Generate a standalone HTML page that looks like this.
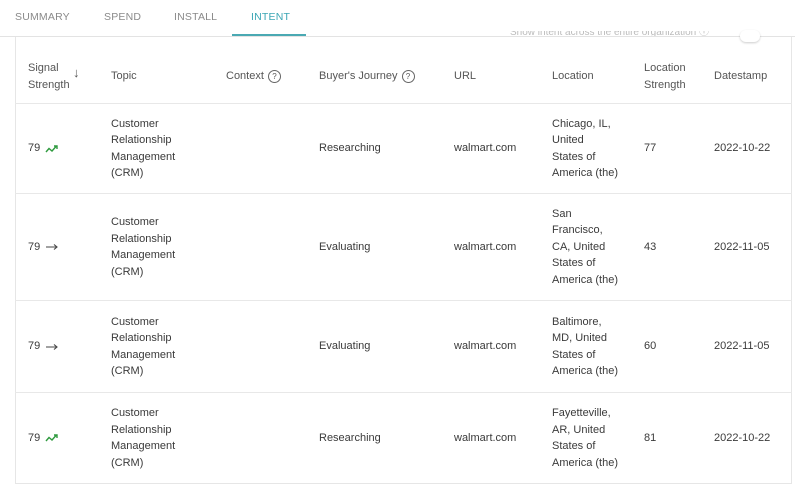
<!DOCTYPE html>
<html><head><meta charset="utf-8"><style>
*{margin:0;padding:0;box-sizing:border-box}
body{width:802px;height:494px;background:#fff;font-family:"Liberation Sans",sans-serif;color:#3a3a3a;font-size:11px;position:relative;overflow:hidden}
.tab{position:absolute;top:11px;font-size:10.5px;color:#8a8a8a;letter-spacing:.2px}
.card{position:absolute;left:15px;top:37px;width:777px;height:447px;border:1px solid #e6e6e6;border-top:none}
.topline{position:absolute;left:0;top:36px;width:795px;height:1px;background:#e3e3e3}
.row{position:absolute;left:15px;width:777px;border-top:1px solid #e8e8e8}
.c{position:absolute;top:0;bottom:0;display:flex;align-items:center;line-height:16.5px}
.h{color:#555}
.q{display:inline-block;width:13px;height:13px;border:1px solid #666;border-radius:50%;font-size:8px;line-height:11px;text-align:center;margin-left:4px;color:#555}
svg{margin-left:5px}
</style></head><body>
<div class="tab" style="left:15px">SUMMARY</div>
<div class="tab" style="left:104px">SPEND</div>
<div class="tab" style="left:174px">INSTALL</div>
<div class="tab" style="left:251px;color:#3ba6b5">INTENT</div>
<div style="position:absolute;left:232px;top:34px;width:74px;height:2px;background:#4aa9b3"></div>
<div class="topline"></div>
<div style="position:absolute;left:510px;top:31px;font-size:10px;color:#bbb;height:5px;overflow:hidden;line-height:4px">Show intent across the entire organization ⓘ</div>
<div style="position:absolute;left:740px;top:30px;width:20px;height:12px;border-radius:6px;background:#fff;box-shadow:0 1px 2px rgba(0,0,0,.2)"></div>
<div class="card"></div>

<div class="row" style="top:50px;height:53px;border-top:none">
<div class="c h" style="left:13px">Signal<br>Strength</div>
<div class="c h" style="left:58px;top:-6px;font-size:13px">↓</div>
<div class="c h" style="left:96px">Topic</div>
<div class="c h" style="left:211px">Context <span class="q">?</span></div>
<div class="c h" style="left:304px">Buyer's Journey <span class="q">?</span></div>
<div class="c h" style="left:439px">URL</div>
<div class="c h" style="left:537px">Location</div>
<div class="c h" style="left:629px">Location<br>Strength</div>
<div class="c h" style="left:699px">Datestamp</div>
</div>

<div class="row" style="top:103px;height:90px">
<div class="c" style="left:13px">79<svg width="14" height="10" viewBox="0 0 14 10"><path d="M1 8 L4 4.5 L7 7 L11 2.5 M9 2 L12 2 L12 5" fill="none" stroke="#2e9a3e" stroke-width="1.4"/></svg></div>
<div class="c" style="left:96px">Customer<br>Relationship<br>Management<br>(CRM)</div>
<div class="c" style="left:304px">Researching</div>
<div class="c" style="left:439px">walmart.com</div>
<div class="c" style="left:537px">Chicago, IL,<br>United<br>States of<br>America (the)</div>
<div class="c" style="left:629px">77</div>
<div class="c" style="left:699px">2022-10-22</div>
</div>

<div class="row" style="top:193px;height:107px">
<div class="c" style="left:13px">79<svg width="14" height="8" viewBox="0 0 14 8"><path d="M1 4 L12 4 M9 1.5 L12 4 L9 6.5" fill="none" stroke="#444" stroke-width="1.1"/></svg></div>
<div class="c" style="left:96px">Customer<br>Relationship<br>Management<br>(CRM)</div>
<div class="c" style="left:304px">Evaluating</div>
<div class="c" style="left:439px">walmart.com</div>
<div class="c" style="left:537px">San<br>Francisco,<br>CA, United<br>States of<br>America (the)</div>
<div class="c" style="left:629px">43</div>
<div class="c" style="left:699px">2022-11-05</div>
</div>

<div class="row" style="top:300px;height:92px">
<div class="c" style="left:13px">79<svg width="14" height="8" viewBox="0 0 14 8"><path d="M1 4 L12 4 M9 1.5 L12 4 L9 6.5" fill="none" stroke="#444" stroke-width="1.1"/></svg></div>
<div class="c" style="left:96px">Customer<br>Relationship<br>Management<br>(CRM)</div>
<div class="c" style="left:304px">Evaluating</div>
<div class="c" style="left:439px">walmart.com</div>
<div class="c" style="left:537px">Baltimore,<br>MD, United<br>States of<br>America (the)</div>
<div class="c" style="left:629px">60</div>
<div class="c" style="left:699px">2022-11-05</div>
</div>

<div class="row" style="top:392px;height:91px">
<div class="c" style="left:13px">79<svg width="14" height="10" viewBox="0 0 14 10"><path d="M1 8 L4 4.5 L7 7 L11 2.5 M9 2 L12 2 L12 5" fill="none" stroke="#2e9a3e" stroke-width="1.4"/></svg></div>
<div class="c" style="left:96px">Customer<br>Relationship<br>Management<br>(CRM)</div>
<div class="c" style="left:304px">Researching</div>
<div class="c" style="left:439px">walmart.com</div>
<div class="c" style="left:537px">Fayetteville,<br>AR, United<br>States of<br>America (the)</div>
<div class="c" style="left:629px">81</div>
<div class="c" style="left:699px">2022-10-22</div>
</div>
</body></html>
